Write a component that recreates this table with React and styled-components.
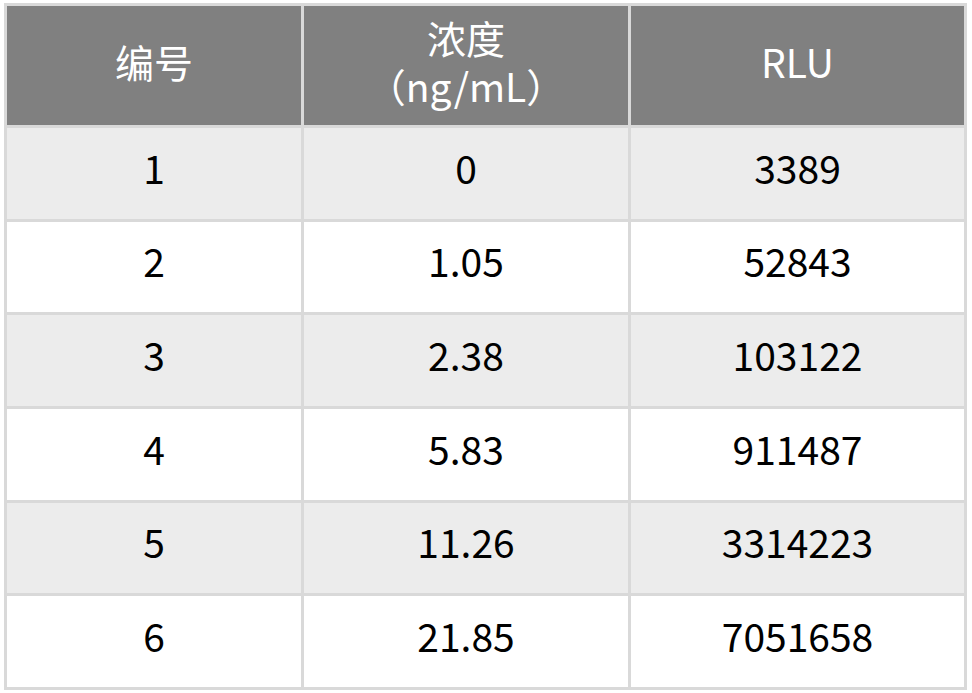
import React from 'react';
import styled, { createGlobalStyle } from 'styled-components';

const rows = [
    ['1', '0', '3389'],
    ['2', '1.05', '52843'],
    ['3', '2.38', '103122'],
    ['4', '5.83', '911487'],
    ['5', '11.26', '3314223'],
    ['6', '21.85', '7051658'],
];

const GlobalStyle = createGlobalStyle`
    html, body {
        margin: 0;
        padding: 0;
        background: #ffffff;
    }
    body {
        font-family: 'Noto Sans CJK SC', 'Noto Sans', sans-serif;
    }
`;

const Page = styled.div`
    padding: 3px 5px 0 4px;
`;

const Table = styled.table`
    width: 963px;
    border-collapse: separate;
    border-spacing: 0;
    border-left: 3px solid #d9d9d9;
    border-top: 3px solid #d9d9d9;
    table-layout: fixed;
`;

const HeadCell = styled.th`
    box-sizing: border-box;
    height: 122px;
    padding: 0 0 9px;
    background: #808080;
    color: #ffffff;
    font-weight: 400;
    font-size: 39px;
    line-height: 48px;
    text-align: center;
    vertical-align: middle;
    border-right: 3px solid #d9d9d9;
    border-bottom: 3px solid #d9d9d9;
`;

const HeadLine = styled.span`
    display: block;
    height: 48px;
`;

const Row = styled.tr`
    background: ${p => (p.$shaded ? '#ececec' : '#ffffff')};
`;

const Cell = styled.td`
    box-sizing: border-box;
    height: 93.67px;
    padding: 0 0 12px;
    color: #000000;
    font-size: 39px;
    line-height: 1;
    text-align: center;
    vertical-align: middle;
    border-right: 3px solid #d9d9d9;
    border-bottom: 3px solid #d9d9d9;
`;

export default function App() {
    return (
        <Page>
            <GlobalStyle />
            <Table>
                <colgroup>
                    <col style={{ width: 297 }} />
                    <col style={{ width: 327 }} />
                    <col style={{ width: 336 }} />
                </colgroup>
                <thead>
                    <tr>
                        <HeadCell>编号</HeadCell>
                        <HeadCell>
                            <HeadLine>浓度</HeadLine>
                            <HeadLine>（ng/mL）</HeadLine>
                        </HeadCell>
                        <HeadCell>RLU</HeadCell>
                    </tr>
                </thead>
                <tbody>
                    {rows.map((r, i) => (
                        <Row key={r[0]} $shaded={i % 2 === 0}>
                            {r.map((v, j) => (
                                <Cell key={j}>{v}</Cell>
                            ))}
                        </Row>
                    ))}
                </tbody>
            </Table>
        </Page>
    );
}
